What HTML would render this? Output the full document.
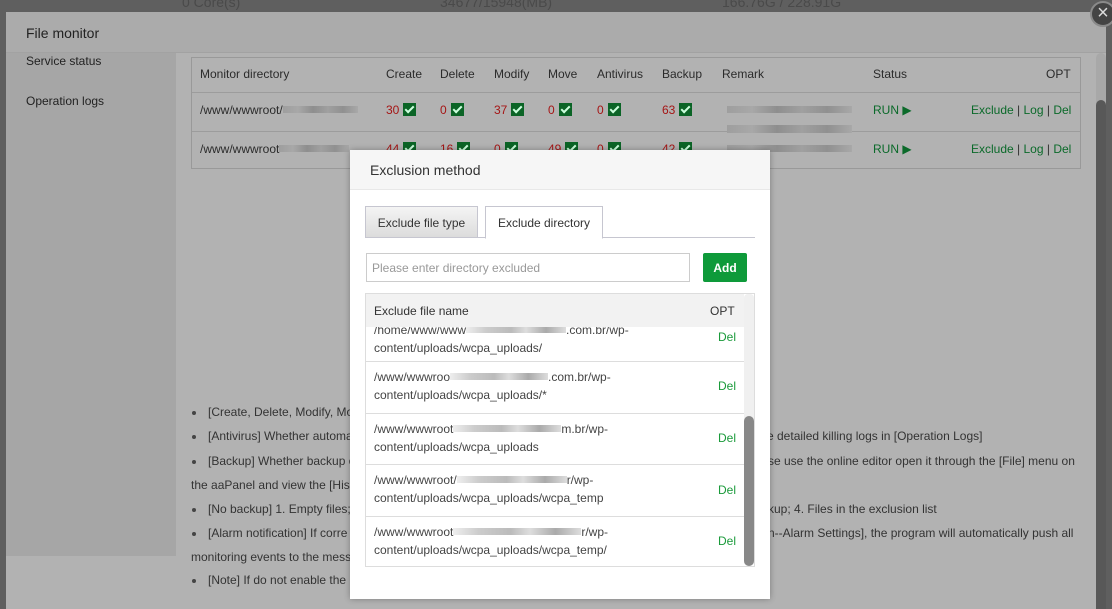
<!DOCTYPE html>
<html><head><meta charset="utf-8"><style>
*{box-sizing:border-box;margin:0;padding:0}
html,body{width:1112px;height:609px;overflow:hidden}
body{background:#5f5f5f;font-family:"Liberation Sans",sans-serif;font-size:12px;color:#2b2b2b;position:relative}
.top{position:absolute;top:-6px;left:0;width:1112px;height:18px;color:#4a4a4a;font-size:14px}
.modal{position:absolute;left:6px;top:12px;width:1100px;height:597px;background:#b2b2b2;overflow:hidden}
.mh{height:41px;background:#ababab;border-bottom:1px solid #a2a2a2;font-size:14px;padding:13px 0 0 20px;color:#222}
.side{position:absolute;left:0;top:41px;width:170px;height:503px;background:#a6a6a6}
.side div{position:absolute;left:20px;font-size:12px;color:#222}
.tbl{position:absolute;left:185px;top:45px;width:890px;height:112px;border:1px solid #999}
.tbl .r{position:absolute;left:0;width:888px;border-bottom:1px solid #9c9c9c}
.a{position:absolute;white-space:nowrap}
.red{color:#a51515}.grn{color:#0b6a2a}
.ck{display:inline-block;width:13px;height:13px;background:#0b6426;vertical-align:-2px;margin-left:4px;position:relative}
.ck:after{content:"";position:absolute;left:4px;top:1px;width:3px;height:7px;border:solid #cfd;border-width:0 2px 2px 0;transform:rotate(45deg)}
.blur{display:inline-block;height:7px;background:linear-gradient(90deg,#9e9e9e,#a8a8a8 20%,#8e8e8e 40%,#a0a0a0 60%,#909090 80%,#a8a8a8);vertical-align:1px}
.sb{position:absolute;left:1090px;top:41px;width:10px;height:560px;background:#a8a8a8;border-radius:5px}
.sb i{position:absolute;left:0;top:47px;width:10px;height:520px;background:#585858;border-radius:5px}
.n{position:absolute;white-space:nowrap;font-size:12px;color:#333}
.dot{position:absolute;left:192px;width:4px;height:4px;border-radius:2px;background:#444}
.close{position:absolute;left:1090px;top:1px;width:26px;height:26px;border-radius:13px;background:#444;border:2px solid #8a8a8a;color:#ddd;font-size:20px;line-height:20px;text-align:center}
.dlg{position:absolute;left:350px;top:150px;width:420px;height:449px;background:#fff;box-shadow:0 0 6px rgba(0,0,0,.3)}
.dh{height:40px;background:#f6f6f6;border-bottom:1px solid #e8e8e8;font-size:14px;padding:12px 0 0 20px;color:#333}
.tab{position:absolute;top:56px;height:32px;border:1px solid #c6c6d0;font-size:12px;color:#333;padding-top:9px;text-align:center}
.inp{position:absolute;left:16px;top:103px;width:324px;height:29px;border:1px solid #ccc;color:#999;padding:7px 0 0 5px}
.add{position:absolute;left:353px;top:103px;width:44px;height:29px;background:#0e9a3a;color:#fff;border-radius:2px;font-weight:bold;text-align:center;padding-top:8px}
.lt{position:absolute;left:15px;top:143px;width:390px;height:274px;border:1px solid #ddd;overflow:hidden}
.lr{position:absolute;left:0;width:378px;border-bottom:1px solid #ddd;color:#444;line-height:18px}
.lr .t{position:absolute;left:8px}
.lr .d{position:absolute;left:352px;color:#1a9a3a}
.lb{display:inline-block;height:7px;background:linear-gradient(90deg,#eee,#ccc 20%,#bbb 45%,#ddd 60%,#aaa 80%,#ddd);vertical-align:1px}
.vs{position:absolute;left:378px;top:0;width:10px;height:272px;background:#f0f0f0;border-radius:4px}
.vs i{position:absolute;left:0;top:122px;width:10px;height:150px;background:#888;border-radius:5px}
</style></head><body>
<div class="top"><span class="a" style="left:182px">0 Core(s)</span><span class="a" style="left:440px">34677/15948(MB)</span><span class="a" style="left:722px">166.76G / 228.91G</span></div>
<div class="modal">
<div class="mh">File monitor</div>
<div class="side"><div style="top:1px">Service status</div><div style="top:41px">Operation logs</div></div>
<div class="tbl">
 <div class="r" style="top:0;height:35px">
  <span class="a" style="left:8px;top:9px">Monitor directory</span><span class="a" style="left:194px;top:9px">Create</span><span class="a" style="left:248px;top:9px">Delete</span><span class="a" style="left:302px;top:9px">Modify</span><span class="a" style="left:356px;top:9px">Move</span><span class="a" style="left:405px;top:9px">Antivirus</span><span class="a" style="left:470px;top:9px">Backup</span><span class="a" style="left:530px;top:9px">Remark</span><span class="a" style="left:681px;top:9px">Status</span><span class="a" style="left:854px;top:9px">OPT</span>
 </div>
 <div class="r" style="top:35px;height:39px">
  <span class="a" style="left:8px;top:10px">/www/wwwroot/<span class="blur" style="width:75px"></span></span>
  <span class="a red" style="left:194px;top:10px">30<i class="ck"></i></span><span class="a red" style="left:248px;top:10px">0<i class="ck"></i></span><span class="a red" style="left:302px;top:10px">37<i class="ck"></i></span><span class="a red" style="left:356px;top:10px">0<i class="ck"></i></span><span class="a red" style="left:405px;top:10px">0<i class="ck"></i></span><span class="a red" style="left:470px;top:10px">63<i class="ck"></i></span>
  <span class="a" style="left:535px;top:10px"><span class="blur" style="width:125px"></span></span>
  <span class="a grn" style="left:681px;top:10px">RUN ▶</span><span class="a grn" style="left:779px;top:10px">Exclude <span style="color:#333">|</span> Log <span style="color:#333">|</span> Del</span>
 </div>
 <div class="r" style="top:74px;height:37px;border:none">
  <span class="a" style="left:8px;top:10px">/www/wwwroot<span class="blur" style="width:70px"></span></span>
  <span class="a red" style="left:194px;top:10px">44<i class="ck"></i></span><span class="a red" style="left:248px;top:10px">16<i class="ck"></i></span><span class="a red" style="left:302px;top:10px">0<i class="ck"></i></span><span class="a red" style="left:356px;top:10px">49<i class="ck"></i></span><span class="a red" style="left:405px;top:10px">0<i class="ck"></i></span><span class="a red" style="left:470px;top:10px">42<i class="ck"></i></span>
  <span class="a" style="left:535px;top:-9px"><span class="blur" style="width:125px;height:8px"></span></span>
  <span class="a" style="left:535px;top:10px"><span class="blur" style="width:125px"></span></span>
  <span class="a grn" style="left:681px;top:10px">RUN ▶</span><span class="a grn" style="left:779px;top:10px">Exclude <span style="color:#333">|</span> Log <span style="color:#333">|</span> Del</span>
 </div>
</div>
<div class="sb"><i></i></div>
</div>
<!-- notes in page coords -->
<div class="dot" style="top:411px"></div><span class="n" style="left:208px;top:405px">[Create, Delete, Modify, Mo</span><span class="n" style="left:760px;top:405px">.</span>
<div class="dot" style="top:435px"></div><span class="n" style="left:208px;top:429px">[Antivirus] Whether automa</span><span class="n" style="left:767px;top:429px">e detailed killing logs in [Operation Logs]</span>
<div class="dot" style="top:460px"></div><span class="n" style="left:208px;top:454px">[Backup] Whether backup o</span><span class="n" style="left:768px;top:454px">se use the online editor open it through the [File] menu on</span>
<span class="n" style="left:191px;top:478px">the aaPanel and view the [His</span>
<div class="dot" style="top:508px"></div><span class="n" style="left:208px;top:502px">[No backup] 1. Empty files;</span><span class="n" style="left:768px;top:502px">kup; 4. Files in the exclusion list</span>
<div class="dot" style="top:532px"></div><span class="n" style="left:208px;top:526px">[Alarm notification] If corre</span><span class="n" style="left:768px;top:526px">n--Alarm Settings], the program will automatically push all</span>
<span class="n" style="left:191px;top:550px">monitoring events to the mess</span>
<div class="dot" style="top:579px"></div><span class="n" style="left:208px;top:573px">[Note] If do not enable the</span>
<div class="close">×</div>
<div class="dlg">
<div class="dh">Exclusion method</div>
<div style="position:absolute;left:15px;top:87px;width:390px;border-top:1px solid #c6c6d0"></div>
<div class="tab" style="left:15px;width:113px;background:linear-gradient(#f4f4f4,#dcdcdc)">Exclude file type</div>
<div class="tab" style="left:135px;width:118px;background:#fff;border-bottom-color:#fff;height:33px">Exclude directory</div>
<div class="inp">Please enter directory excluded</div>
<div class="add">Add</div>
<div class="lt">
 <div class="lr" style="top:35px;height:33px"><span class="t" style="top:-8px">/home/www/www<span class="lb" style="width:100px"></span>.com.br/wp-<br>content/uploads/wcpa_uploads/</span><span class="d" style="top:-1px">Del</span></div>
 <div class="lr" style="top:68px;height:52px"><span class="t" style="top:6px">/www/wwwroo<span class="lb" style="width:98px"></span>.com.br/wp-<br>content/uploads/wcpa_uploads/*</span><span class="d" style="top:15px">Del</span></div>
 <div class="lr" style="top:120px;height:51px"><span class="t" style="top:6px">/www/wwwroot<span class="lb" style="width:108px"></span>m.br/wp-<br>content/uploads/wcpa_uploads</span><span class="d" style="top:15px">Del</span></div>
 <div class="lr" style="top:171px;height:52px"><span class="t" style="top:6px">/www/wwwroot/<span class="lb" style="width:110px"></span>r/wp-<br>content/uploads/wcpa_uploads/wcpa_temp</span><span class="d" style="top:16px">Del</span></div>
 <div class="lr" style="top:223px;height:51px;border:none"><span class="t" style="top:6px">/www/wwwroot<span class="lb" style="width:128px"></span>r/wp-<br>content/uploads/wcpa_uploads/wcpa_temp/</span><span class="d" style="top:15px">Del</span></div>
 <div class="lr" style="top:0;height:33px;background:#f2f2f2;border-bottom:none"><span class="t" style="top:8px;color:#333">Exclude file name</span><span class="a" style="left:344px;top:8px;color:#333">OPT</span></div>
 <div class="vs"><i></i></div>
</div>
</div>
</body></html>
